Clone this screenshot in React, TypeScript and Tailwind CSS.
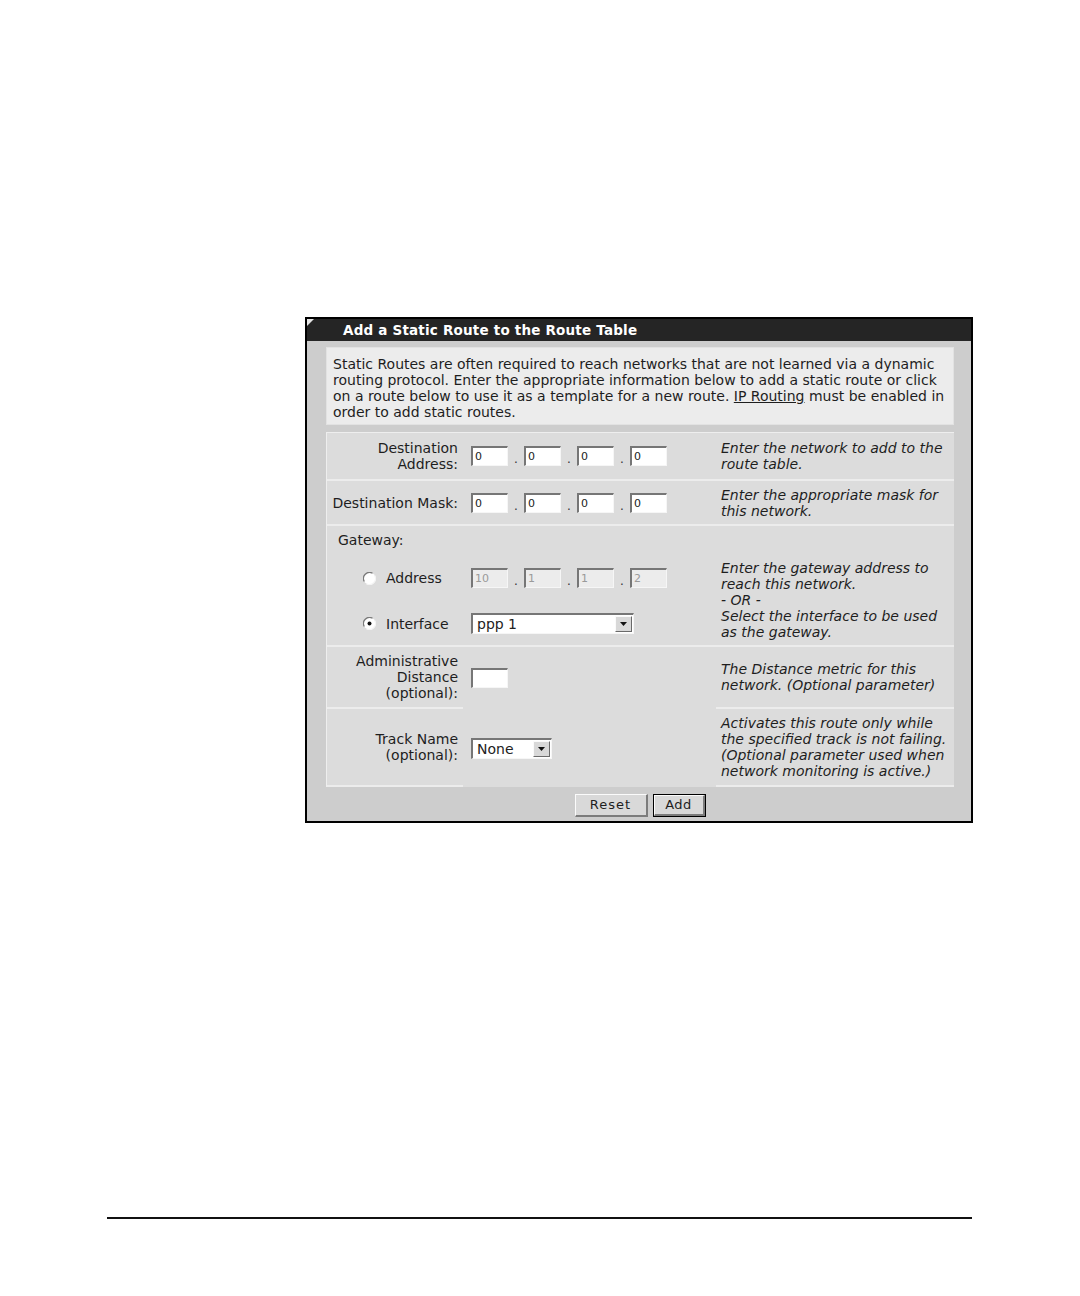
import React from "react";

const font = { fontFamily: '"DejaVu Sans", Verdana, sans-serif' };

function Field({ value, disabled = false, w = "w-[37px]" }: { value: string; disabled?: boolean; w?: string }) {
  return (
    <div
      className={`${w} h-[20px] border-t-2 border-l-2 border-b border-r border-t-[#767676] border-l-[#767676] border-b-[#f6f6f6] border-r-[#f6f6f6] ${
        disabled ? "bg-[#ececec] text-[#9a9a9a]" : "bg-white text-[#222]"
      } text-[11px] leading-[18px] pl-[2px] box-border`}
    >
      {value}
    </div>
  );
}

function Quad({ values, disabled = false }: { values: string[]; disabled?: boolean }) {
  return (
    <div className="flex items-end">
      {values.map((v, i) => (
        <React.Fragment key={i}>
          {i > 0 && <span className="w-[16px] text-center text-[12px] leading-[14px] text-[#333]">.</span>}
          <Field value={v} disabled={disabled} />
        </React.Fragment>
      ))}
    </div>
  );
}

function Select({ value, w }: { value: string; w: string }) {
  return (
    <div
      className={`${w} h-[21px] flex items-center justify-between border-t-2 border-l-2 border-b border-r border-t-[#767676] border-l-[#767676] border-b-[#f6f6f6] border-r-[#f6f6f6] bg-white box-border`}
    >
      <span className="pl-[4px] text-[14px] leading-[16px] text-[#222]">{value}</span>
      <span className="mr-[1px] w-[17px] h-[16px] bg-[#d8d8d8] border-t border-l border-b border-r border-t-[#fafafa] border-l-[#fafafa] border-b-[#6a6a6a] border-r-[#6a6a6a] flex items-center justify-center box-border">
        <svg width="7" height="4" viewBox="0 0 7 4">
          <path d="M0 0 H7 L3.5 4 Z" fill="#111" />
        </svg>
      </span>
    </div>
  );
}

function Radio({ checked }: { checked: boolean }) {
  return (
    <svg width="13" height="13" viewBox="0 0 13 13">
      <circle cx="6.5" cy="6.5" r="6" fill="#ffffff" />
      <path d="M1.3 9.5 A6 6 0 0 1 9.5 1.3" stroke="#7a7a7a" strokeWidth="1.3" fill="none" />
      <path d="M11.7 3.5 A6 6 0 0 1 3.5 11.7" stroke="#f4f4f4" strokeWidth="1.3" fill="none" />
      {checked && <circle cx="6.5" cy="6.5" r="2" fill="#111" />}
    </svg>
  );
}

export default function App() {
  const cellL = "w-[136px] shrink-0 text-right pr-[5px] text-[14px] leading-[16px] text-[#1e1e1e] whitespace-nowrap";
  const cellD = "flex-1 pl-[5px] pr-[2px] italic text-[14px] leading-[16px] text-[#1e1e1e] whitespace-nowrap";
  const line = "block whitespace-nowrap";
  return (
    <div className="w-[1080px] h-[1296px] bg-white flex flex-col" style={font}>
      <div className="ml-[305px] mt-[317px] w-[668px] border-2 border-black bg-[#cdcdcd] box-border">
        {/* header */}
        <div className="relative h-[22px] bg-[#252525] flex items-center">
          <svg className="absolute left-0 top-0" width="7" height="7" viewBox="0 0 7 7">
            <path d="M0 0 H7 L0 7 Z" fill="#e6e6e6" />
          </svg>
          <span className="pl-[36px] text-white font-bold text-[13.5px] leading-[16px] tracking-[0.2px]">
            Add a Static Route to the Route Table
          </span>
        </div>
        {/* body */}
        <div className="pl-[19px] pr-[17px] pt-[6px] pb-[3px]">
          <div className="bg-[#ececec] border border-[#e2e2e2] px-[6px] pt-[8px] pb-[4px] text-[14px] leading-[16px] text-[#1e1e1e]">
            <span className={line}>Static Routes are often required to reach networks that are not learned via a dynamic</span>
            <span className={line}>routing protocol. Enter the appropriate information below to add a static route or click</span>
            <span className={line}>
              on a route below to use it as a template for a new route. <span className="underline">IP Routing</span> must be
              enabled in
            </span>
            <span className={line}>order to add static routes.</span>
          </div>

          <div className="mt-[7px] bg-[#dcdcdc] border-l border-t border-[#eeeeee]">
            {/* Destination Address */}
            <div className="h-[48px] flex items-center border-b-2 border-[#ececec]">
              <div className={cellL}>
                Destination
                <br />
                Address:
              </div>
              <div className="w-[253px] shrink-0 pl-[8px]">
                <Quad values={["0", "0", "0", "0"]} />
              </div>
              <div className={cellD}>
                Enter the network to add to the
                <br />
                route table.
              </div>
            </div>
            {/* Destination Mask */}
            <div className="h-[45px] flex items-center border-b-2 border-[#ececec]">
              <div className={cellL}>Destination Mask:</div>
              <div className="w-[253px] shrink-0 pl-[8px]">
                <Quad values={["0", "0", "0", "0"]} />
              </div>
              <div className={cellD}>
                Enter the appropriate mask for
                <br />
                this network.
              </div>
            </div>
            {/* Gateway */}
            <div className="h-[121px] flex border-b-2 border-[#ececec]">
              <div className="w-[389px] shrink-0 flex flex-col pt-[6px]">
                <div className="pl-[11px] text-[14px] leading-[16px] text-[#1e1e1e]">Gateway:</div>
                <div className="mt-[20px] flex items-center h-[20px]">
                  <div className="w-[136px] shrink-0 flex items-center pl-[36px]">
                    <Radio checked={false} />
                    <span className="ml-[10px] text-[14px] leading-[16px] text-[#1e1e1e]">Address</span>
                  </div>
                  <div className="pl-[8px]">
                    <Quad values={["10", "1", "1", "2"]} disabled />
                  </div>
                </div>
                <div className="mt-[25px] flex items-center h-[21px]">
                  <div className="w-[136px] shrink-0 flex items-center pl-[36px]">
                    <Radio checked={true} />
                    <span className="ml-[10px] text-[14px] leading-[16px] text-[#1e1e1e]">Interface</span>
                  </div>
                  <div className="pl-[8px]">
                    <Select value="ppp 1" w="w-[163px]" />
                  </div>
                </div>
              </div>
              <div className={`${cellD} pt-[34px]`}>
                Enter the gateway address to
                <br />
                reach this network.
                <br />- OR -
                <br />
                Select the interface to be used
                <br />
                as the gateway.
              </div>
            </div>
            {/* Administrative Distance */}
            <div className="h-[62px] flex items-stretch">
              <div className={`${cellL} flex flex-col justify-center border-b-2 border-[#ececec]`}>
                <span>Administrative</span>
                <span>Distance</span>
                <span>(optional):</span>
              </div>
              <div className="w-[253px] shrink-0 pl-[8px] flex items-center">
                <Field value="" />
              </div>
              <div className={`${cellD} flex flex-col justify-center border-b-2 border-[#ececec]`}>
                <span>The Distance metric for this</span>
                <span>network. (Optional parameter)</span>
              </div>
            </div>
            {/* Track Name */}
            <div className="h-[78px] flex items-stretch">
              <div className={`${cellL} flex flex-col justify-center border-b-2 border-[#ececec]`}>
                <span>Track Name</span>
                <span>(optional):</span>
              </div>
              <div className="w-[253px] shrink-0 pl-[8px] flex items-center">
                <Select value="None" w="w-[81px]" />
              </div>
              <div className={`${cellD} flex flex-col justify-center border-b-2 border-[#ececec]`}>
                <span>Activates this route only while</span>
                <span>the specified track is not failing.</span>
                <span>(Optional parameter used when</span>
                <span>network monitoring is active.)</span>
              </div>
            </div>
          </div>

          {/* buttons */}
          <div className="mt-[7px] mb-[1px] flex justify-center gap-[5px]">
            <button
              className="w-[73px] h-[23px] bg-[#d9d9d9] border-t border-l border-b-2 border-r-2 border-t-[#fbfbfb] border-l-[#fbfbfb] border-b-[#7c7c7c] border-r-[#7c7c7c] text-[13px] leading-[16px] tracking-[1px] text-[#1e1e1e]"
              style={font}
            >
              Reset
            </button>
            <div className="border border-black">
              <button
                className="w-[51px] h-[21px] bg-[#d9d9d9] border-t border-l border-b-2 border-r-2 border-t-[#fbfbfb] border-l-[#fbfbfb] border-b-[#7c7c7c] border-r-[#7c7c7c] text-[13px] leading-[16px] tracking-[0.5px] text-[#1e1e1e] block"
                style={font}
              >
                Add
              </button>
            </div>
          </div>
        </div>
      </div>
      <div className="ml-[107px] mt-[394px] w-[865px] h-[2px] bg-[#111]" />
    </div>
  );
}
